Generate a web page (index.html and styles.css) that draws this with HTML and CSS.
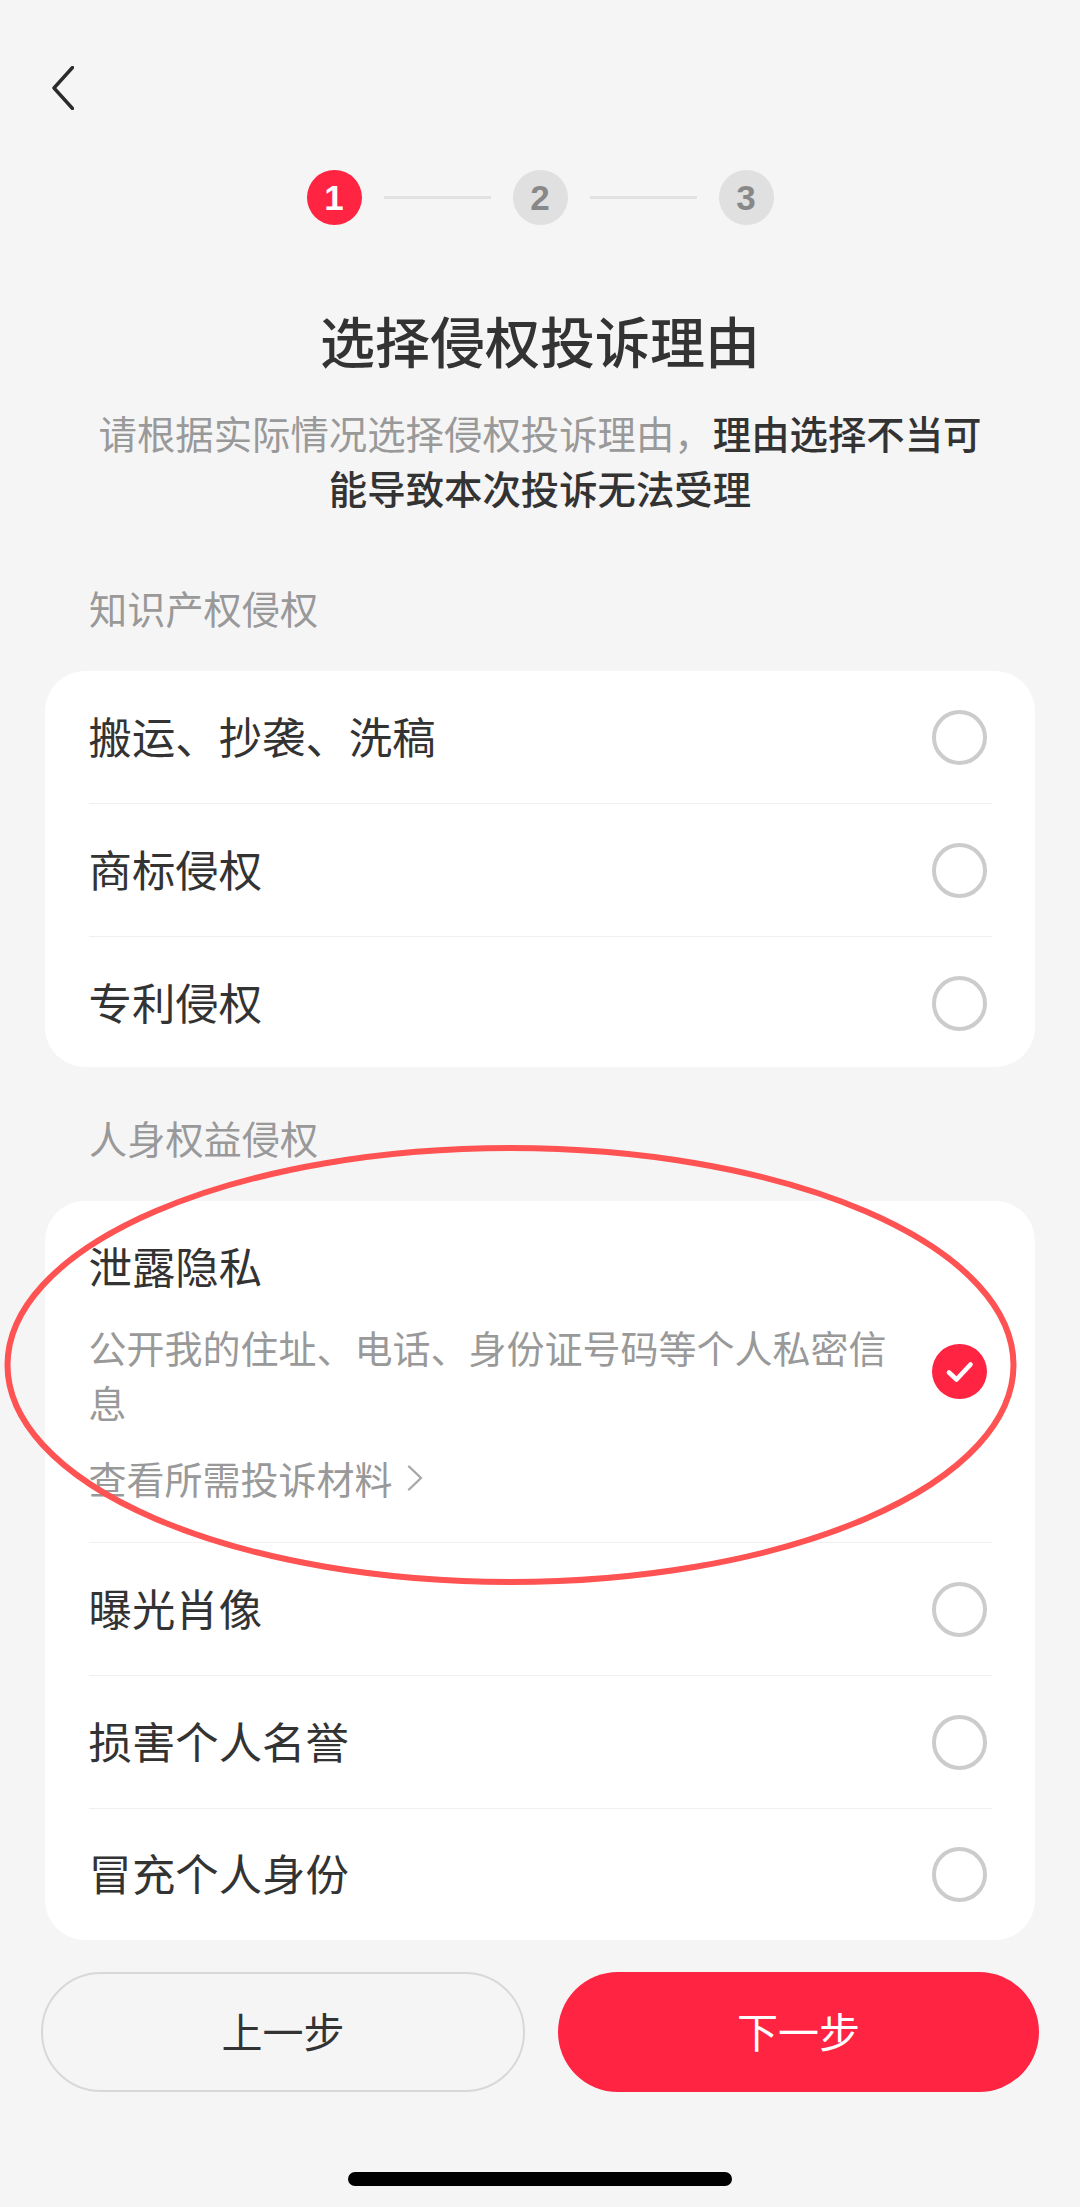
FILE: index.html
```html
<!DOCTYPE html>
<html lang="zh-CN">
<head>
<meta charset="utf-8">
<title>选择侵权投诉理由</title>
<link rel="stylesheet" href="styles.css">
</head>
<body>
<main class="page">
  <header class="topbar">
    <svg class="back" viewBox="0 0 22 44" width="22" height="44"><path d="M20.5 1.5 L2 22 L20.5 42.5" fill="none" stroke="#2b2b2b" stroke-width="3.4" stroke-linecap="round" stroke-linejoin="round"/></svg>
  </header>

  <ol class="steps">
    <li class="step step-active">1</li>
    <li class="step-line"></li>
    <li class="step">2</li>
    <li class="step-line"></li>
    <li class="step">3</li>
  </ol>

  <h1 class="title">选择侵权投诉理由</h1>
  <p class="intro">请根据实际情况选择侵权投诉理由，<strong>理由选择不当可</strong><br><strong>能导致本次投诉无法受理</strong></p>

  <h2 class="section-label">知识产权侵权</h2>
  <section class="card">
    <div class="row"><span class="row-name">搬运、抄袭、洗稿</span><span class="radio"></span></div>
    <div class="row"><span class="row-name">商标侵权</span><span class="radio"></span></div>
    <div class="row"><span class="row-name">专利侵权</span><span class="radio"></span></div>
  </section>

  <h2 class="section-label section-label-2">人身权益侵权</h2>
  <section class="card card-2">
    <div class="row row-open">
      <div class="row-body">
        <div class="row-name">泄露隐私</div>
        <p class="row-desc">公开我的住址、电话、身份证号码等个人私密信息</p>
        <div class="row-link">查看所需投诉材料<svg class="link-chevron" viewBox="0 0 16 26" width="16" height="26"><path d="M2 1.5 L14 13 L2 24.5" fill="none" stroke="#a8a8a8" stroke-width="2.4" stroke-linecap="round" stroke-linejoin="round"/></svg></div>
      </div>
      <span class="radio radio-on"><svg viewBox="0 0 55 55" width="55" height="55"><path d="M17 28.5 L24.5 35.5 L38.5 20.5" fill="none" stroke="#fff" stroke-width="4.6" stroke-linecap="round" stroke-linejoin="round"/></svg></span>
    </div>
    <div class="row"><span class="row-name">曝光肖像</span><span class="radio"></span></div>
    <div class="row"><span class="row-name">损害个人名誉</span><span class="radio"></span></div>
    <div class="row"><span class="row-name">冒充个人身份</span><span class="radio"></span></div>
  </section>

  <div class="actions">
    <button class="btn btn-prev">上一步</button>
    <button class="btn btn-next">下一步</button>
  </div>

  <div class="home-bar"></div>

  <svg class="annotation" viewBox="0 0 1080 2207" width="1080" height="2207"><ellipse cx="510.5" cy="1365" rx="503" ry="217" fill="none" stroke="#ff5252" stroke-width="6"/></svg>
</main>
</body>
</html>
```
FILE: styles.css
```css
* { box-sizing: border-box; }
html, body { margin: 0; padding: 0; }
body {
  background: #f5f5f5;
  font-family: "Noto Sans CJK SC", "Liberation Sans", sans-serif;
  color: #333;
}
.page {
  position: relative;
  width: 1080px;
  height: 2207px;
  overflow: hidden;
  display: flex;
  flex-direction: column;
}
.topbar {
  height: 170px;
  padding: 66px 0 0 52px;
}
.back { display: block; }
.steps {
  list-style: none;
  margin: 0;
  padding: 0;
  height: 55px;
  display: flex;
  justify-content: center;
  align-items: center;
  gap: 22px;
}
.step {
  width: 55px;
  height: 55px;
  border-radius: 50%;
  background: #e0e0e0;
  color: #888;
  font: 700 35px/55px "Liberation Sans", sans-serif;
  text-align: center;
}
.step-active { background: #ff2442; color: #fff; }
.step-line { width: 107px; height: 3px; background: #e2e2e2; }
.title {
  margin: 84px 0 0;
  height: 60px;
  font-size: 55px;
  line-height: 60px;
  font-weight: 500;
  text-align: center;
  color: #333;
}
.intro {
  margin: 36px auto 0;
  width: 890px;
  font-size: 38.4px;
  line-height: 55px;
  text-align: center;
  color: #999;
}
.intro strong { font-weight: 500; color: #333; }
.section-label {
  margin: 65px 0 0 89px;
  height: 56px;
  font-size: 38.2px;
  line-height: 56px;
  font-weight: 400;
  color: #999;
}
.section-label-2 { margin-top: 43px; }
.card {
  margin: 35px 45px 0;
  background: #fff;
  border-radius: 40px;
  padding: 0 43px 0 43.5px;
}
.row {
  height: 133px;
  display: flex;
  align-items: center;
  justify-content: space-between;
  padding-right: 5px;
  border-bottom: 1px solid #f0f0f0;
}
.row:last-child { border-bottom: 0; height: 130px; padding-top: 2px; }
.card-2 > .row:last-child { height: 131px; padding-top: 0; }
.row-name { font-size: 43.4px; line-height: 60px; color: #333; }
.row > .row-name { margin-bottom: 5px; }
.card > .row-open:first-child { height: 342px; }
.row-body { width: 810px; }
.row-desc {
  margin: 24px 0 0;
  font-size: 38px;
  line-height: 55px;
  color: #999;
}
.row-link {
  margin-top: 21px;
  padding-bottom: 3px;
  font-size: 38px;
  line-height: 55px;
  color: #999;
  display: flex;
  align-items: center;
}
.link-chevron { margin-left: 14px; }
.radio {
  flex: none;
  width: 55px;
  height: 55px;
  border-radius: 50%;
  border: 4px solid #ccc;
}
.radio-on { border: 0; background: #ff2442; display: block; }
.radio-on svg { display: block; }
.actions {
  margin: 32px 41px 0;
  display: flex;
  justify-content: space-between;
}
.btn {
  height: 120px;
  font-family: inherit;
  font-size: 41px;
  border-radius: 60px;
  padding: 0 0 4px;
}
.btn-prev {
  width: 484px;
  background: #f5f5f5;
  border: 2px solid #d8d8d8;
  color: #333;
}
.btn-next {
  width: 481px;
  background: #ff2442;
  border: 0;
  color: #fff;
}
.home-bar {
  margin: 80px auto 0;
  width: 384px;
  height: 14px;
  border-radius: 7px;
  background: #000;
}
.annotation {
  position: absolute;
  left: 0;
  top: 0;
  pointer-events: none;
}
```
